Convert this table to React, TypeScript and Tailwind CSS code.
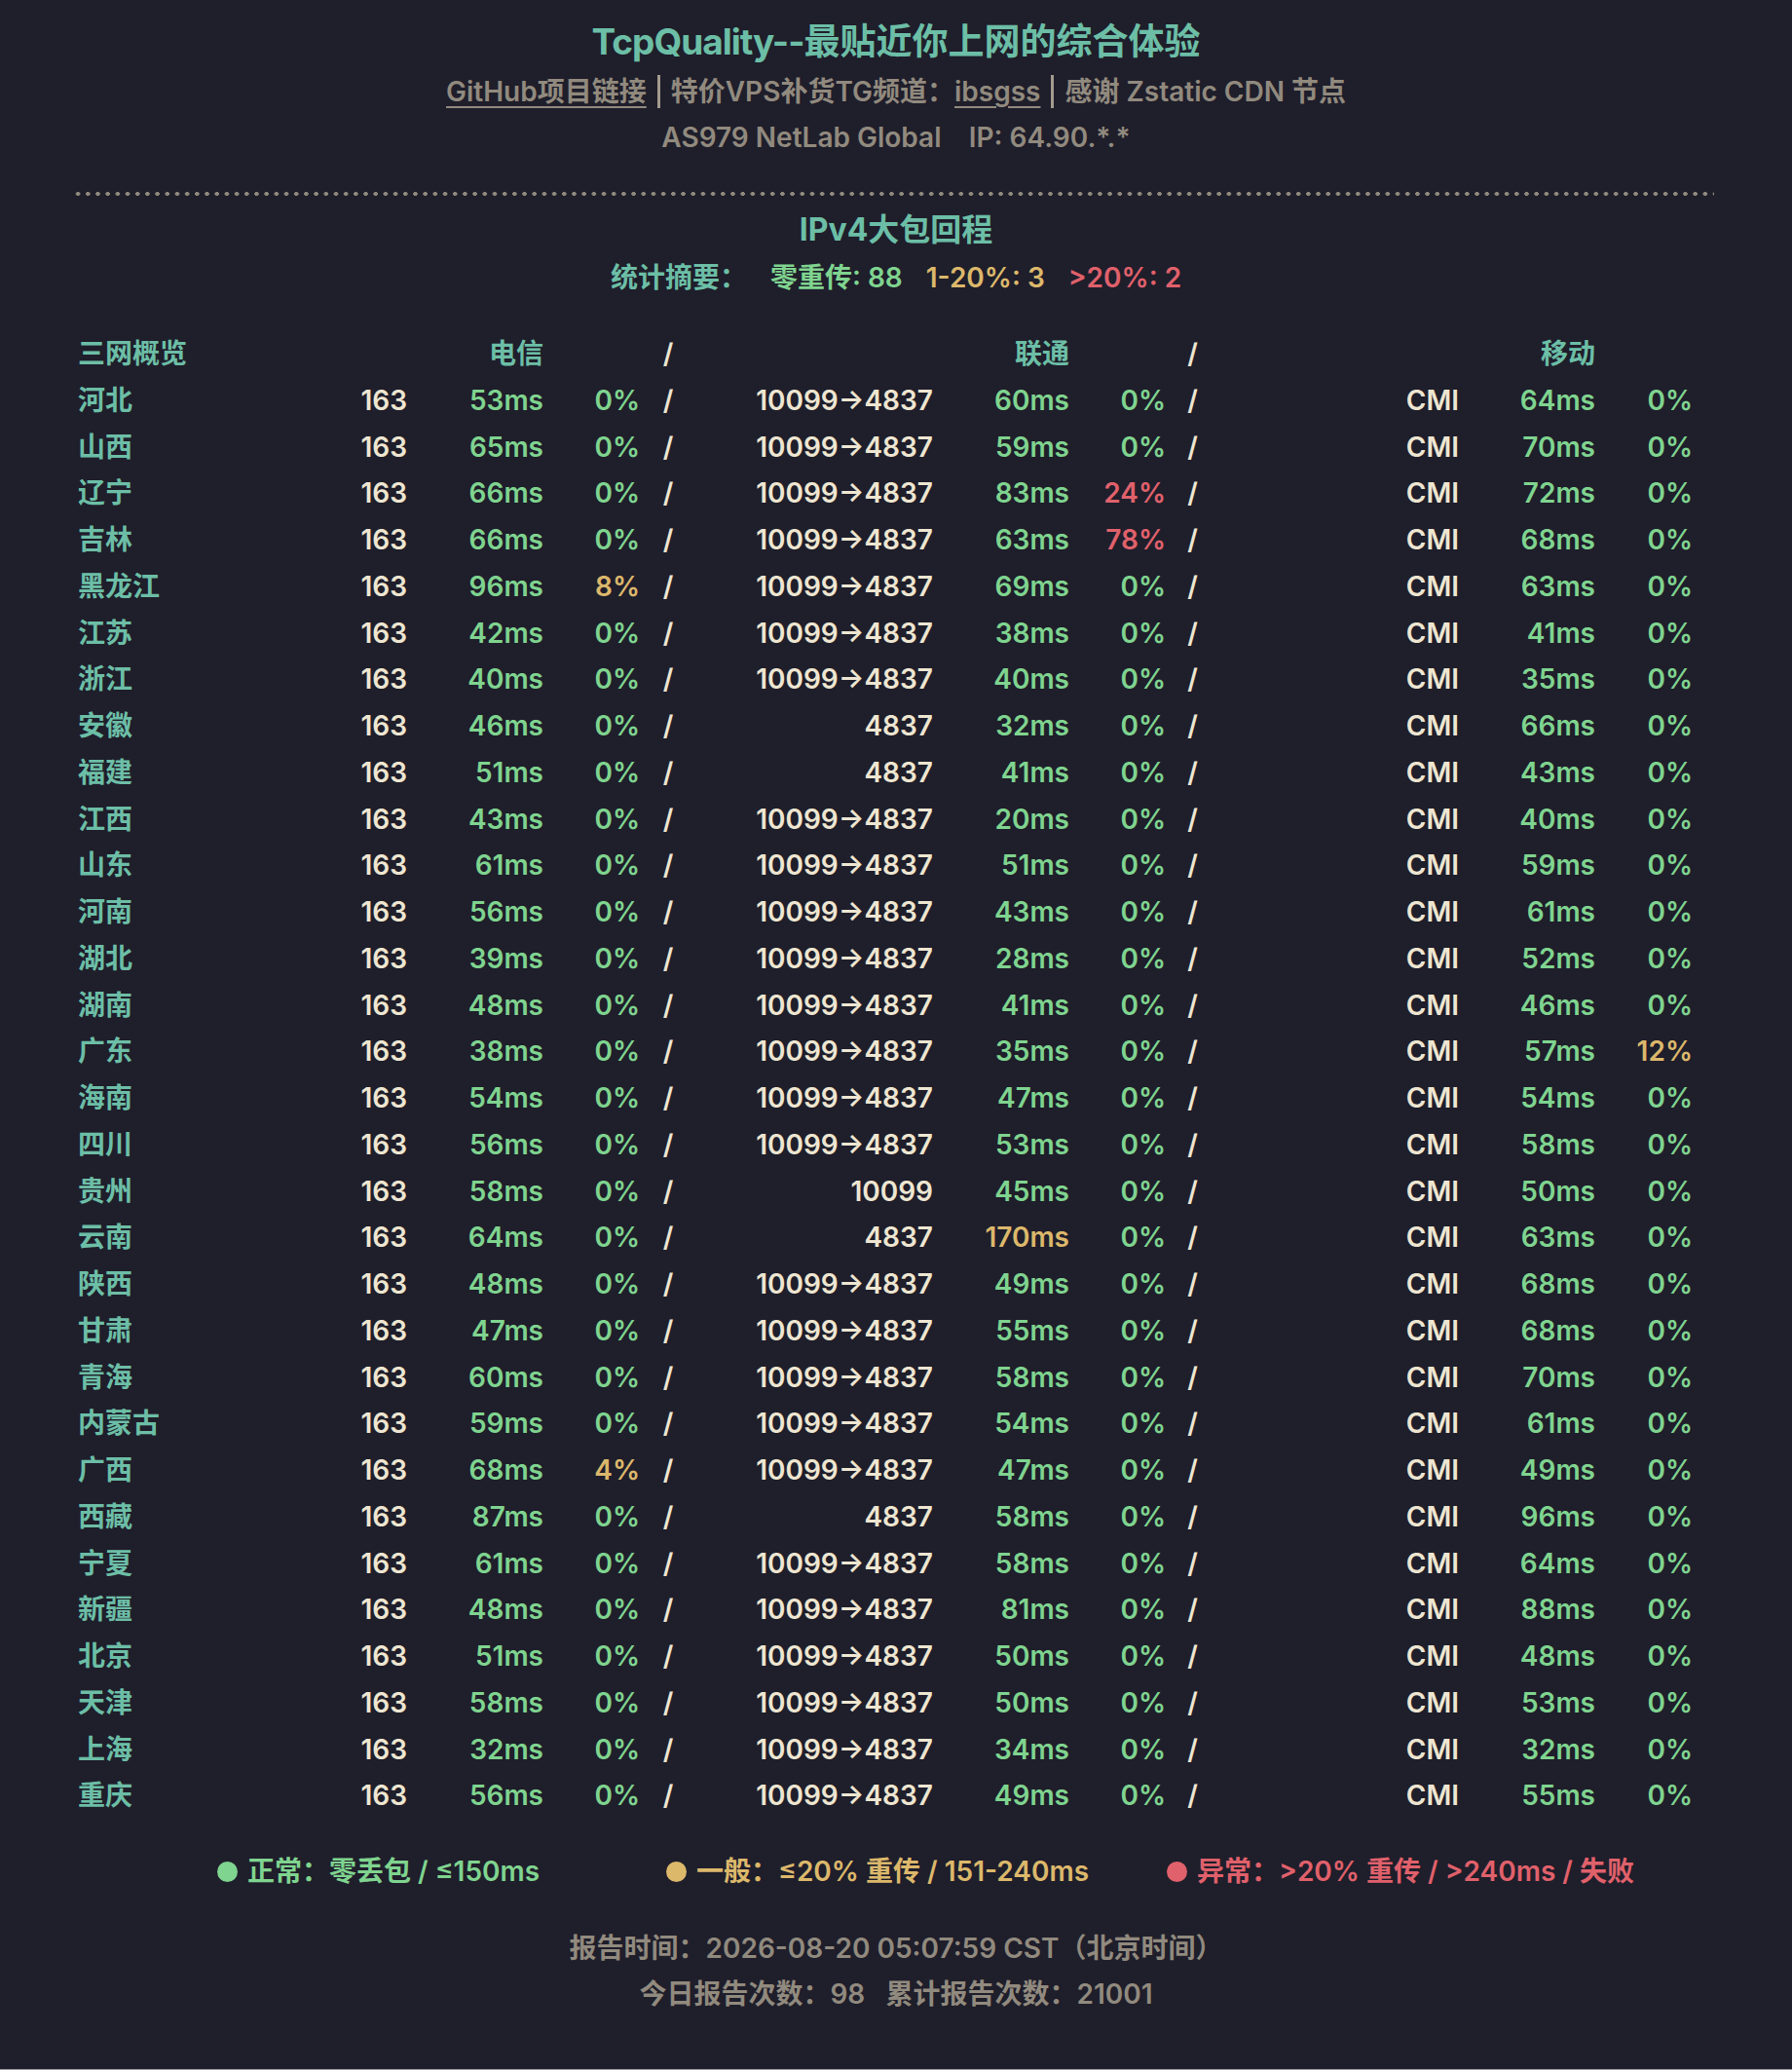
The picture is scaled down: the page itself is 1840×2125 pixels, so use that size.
import React from 'react';

type Row = [string, number, number, string, number, number, number, number];

const ROWS: Row[] = [
  ['河北', 53, 0, '10099→4837', 60, 0, 64, 0],
  ['山西', 65, 0, '10099→4837', 59, 0, 70, 0],
  ['辽宁', 66, 0, '10099→4837', 83, 24, 72, 0],
  ['吉林', 66, 0, '10099→4837', 63, 78, 68, 0],
  ['黑龙江', 96, 8, '10099→4837', 69, 0, 63, 0],
  ['江苏', 42, 0, '10099→4837', 38, 0, 41, 0],
  ['浙江', 40, 0, '10099→4837', 40, 0, 35, 0],
  ['安徽', 46, 0, '4837', 32, 0, 66, 0],
  ['福建', 51, 0, '4837', 41, 0, 43, 0],
  ['江西', 43, 0, '10099→4837', 20, 0, 40, 0],
  ['山东', 61, 0, '10099→4837', 51, 0, 59, 0],
  ['河南', 56, 0, '10099→4837', 43, 0, 61, 0],
  ['湖北', 39, 0, '10099→4837', 28, 0, 52, 0],
  ['湖南', 48, 0, '10099→4837', 41, 0, 46, 0],
  ['广东', 38, 0, '10099→4837', 35, 0, 57, 12],
  ['海南', 54, 0, '10099→4837', 47, 0, 54, 0],
  ['四川', 56, 0, '10099→4837', 53, 0, 58, 0],
  ['贵州', 58, 0, '10099', 45, 0, 50, 0],
  ['云南', 64, 0, '4837', 170, 0, 63, 0],
  ['陕西', 48, 0, '10099→4837', 49, 0, 68, 0],
  ['甘肃', 47, 0, '10099→4837', 55, 0, 68, 0],
  ['青海', 60, 0, '10099→4837', 58, 0, 70, 0],
  ['内蒙古', 59, 0, '10099→4837', 54, 0, 61, 0],
  ['广西', 68, 4, '10099→4837', 47, 0, 49, 0],
  ['西藏', 87, 0, '4837', 58, 0, 96, 0],
  ['宁夏', 61, 0, '10099→4837', 58, 0, 64, 0],
  ['新疆', 48, 0, '10099→4837', 81, 0, 88, 0],
  ['北京', 51, 0, '10099→4837', 50, 0, 48, 0],
  ['天津', 58, 0, '10099→4837', 50, 0, 53, 0],
  ['上海', 32, 0, '10099→4837', 34, 0, 32, 0],
  ['重庆', 56, 0, '10099→4837', 49, 0, 55, 0],
];

const GREEN = 'text-[#7fd48f]';
const YELLOW = 'text-[#dcb86b]';
const RED = 'text-[#e0616b]';

const msTone = (ms: number) => (ms <= 150 ? GREEN : ms <= 240 ? YELLOW : RED);
const lossTone = (p: number) => (p === 0 ? GREEN : p <= 20 ? YELLOW : RED);

const grid =
  'grid grid-cols-[200px_138px_140px_99px_58px_243px_140px_99px_55px_246px_140px_100px] leading-[47.75px]';

const Bar = () => <span className="mx-[11px] inline-block w-[3px] h-[34px] bg-[#a39c8e]" />;

const App: React.FC = () => {
  return (
    <div className="min-h-[2125px] border-b border-[#9d9ca5] bg-[#1f1e2b] font-['Inter','Noto_Sans_CJK_SC',sans-serif] font-semibold text-[28px] text-[#918a7e] px-20 pt-[18px]">
      {/* Header */}
      <div className="flex flex-col items-center">
        <h1 className="text-[37px] leading-[50px] font-bold text-[#6cbea6]">
          <span className="tracking-[-1px]">TcpQuality--</span>最贴近你上网的综合体验
        </h1>
        <div className="mt-[2px] leading-[48px] flex items-center">
          <a href="#" className="underline underline-offset-[5px] decoration-2">GitHub项目链接</a>
          <Bar />
          <span>特价VPS补货TG频道：</span>
          <a href="#" className="underline underline-offset-[5px] decoration-2">ibsgss</a>
          <Bar />
          <span>感谢 Zstatic CDN 节点</span>
        </div>
        <div className="leading-[46px] whitespace-pre">AS979 NetLab Global    IP: 64.90.*.*</div>
      </div>

      {/* Divider */}
      <div className="mt-[33px] -ml-[5px] w-[1685px] h-1 bg-[radial-gradient(circle,#8f897d_2px,transparent_2.4px)] bg-[length:10.2px_4px]" />

      <div className="mt-[13px] text-center text-[32px] leading-[44px] font-bold text-[#6cbea6]">IPv4大包回程</div>
      <div className="mt-[7px] flex justify-center gap-[24px] leading-[40px]">
        <span className="text-[#6cbea6]">统计摘要：</span>
        <span className={GREEN}>零重传: 88</span>
        <span className={YELLOW}>1-20%: 3</span>
        <span className={RED}>&gt;20%: 2</span>
      </div>

      {/* Table */}
      <div className="mt-[35px]">
        <div className={grid}>
          <span className="text-[#6cbea6]">三网概览</span>
          <span />
          <span className="text-right text-[#6cbea6]">电信</span>
          <span />
          <span className="text-center text-[#eee6d1]">/</span>
          <span />
          <span className="text-right text-[#6cbea6]">联通</span>
          <span />
          <span className="text-center text-[#eee6d1]">/</span>
          <span />
          <span className="text-right text-[#6cbea6]">移动</span>
          <span />
        </div>
        {ROWS.map((r) => (
          <div key={r[0]} className={grid}>
            <span className="text-[#6cbea6]">{r[0]}</span>
            <span className="text-right text-[#eee6d1]">163</span>
            <span className={`text-right ${msTone(r[1])}`}>{r[1]}ms</span>
            <span className={`text-right ${lossTone(r[2])}`}>{r[2]}%</span>
            <span className="text-center text-[#eee6d1]">/</span>
            <span className="text-right text-[#eee6d1]">{r[3]}</span>
            <span className={`text-right ${msTone(r[4])}`}>{r[4]}ms</span>
            <span className={`text-right ${lossTone(r[5])}`}>{r[5]}%</span>
            <span className="text-center text-[#eee6d1]">/</span>
            <span className="text-right text-[#eee6d1]">CMI</span>
            <span className={`text-right ${msTone(r[6])}`}>{r[6]}ms</span>
            <span className={`text-right ${lossTone(r[7])}`}>{r[7]}%</span>
          </div>
        ))}
      </div>

      {/* Legend */}
      <div className="mt-[33px] flex items-center leading-[40px] pl-[143px]">
        <span className={`flex items-center gap-[10px] ${GREEN}`}>
          <span className="w-[21px] h-[21px] rounded-full bg-[#7fd48f]" />
          正常：零丢包 / ≤150ms
        </span>
        <span className={`ml-[130px] flex items-center gap-[10px] ${YELLOW}`}>
          <span className="w-[21px] h-[21px] rounded-full bg-[#dcb86b]" />
          一般：≤20% 重传 / 151-240ms
        </span>
        <span className={`ml-[80px] flex items-center gap-[10px] ${RED}`}>
          <span className="w-[21px] h-[21px] rounded-full bg-[#e0616b]" />
          异常：&gt;20% 重传 / &gt;240ms / 失败
        </span>
      </div>

      {/* Footer */}
      <div className="mt-[37px] flex flex-col items-center">
        <div className="leading-[44px]">报告时间：2026-08-20 05:07:59 CST（北京时间）</div>
        <div className="mt-[3px] leading-[44px] whitespace-pre">今日报告次数：98   累计报告次数：21001</div>
      </div>
    </div>
  );
};

export default App;
